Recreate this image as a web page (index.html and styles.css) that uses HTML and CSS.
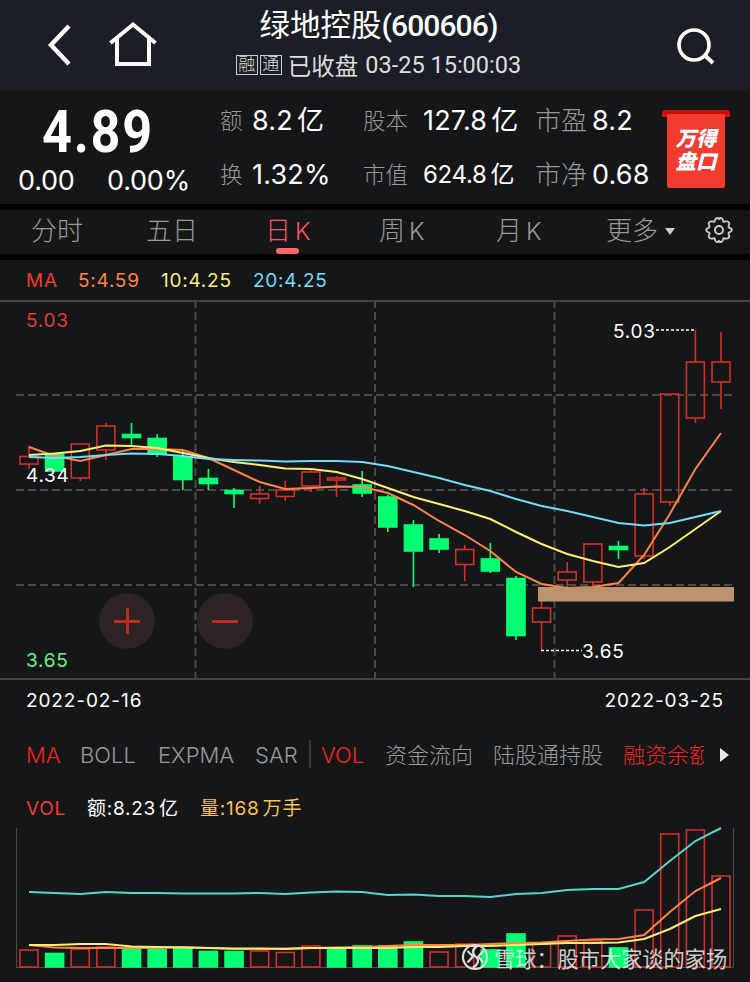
FILE: index.html
```
<!DOCTYPE html>
<html lang="zh-CN">
<head>
  <meta charset="UTF-8">
  <meta name="viewport" content="width=device-width, initial-scale=1.0">
  <title>绿地控股(600606)</title>
  <link rel="stylesheet" href="styles.css">
</head>
<body>
  <header class="topbar">
    <div class="nav">
      <svg width="26" height="44" viewBox="0 0 26 44"><path d="M23 3 L5 22 L23 41" fill="none" stroke="#fff" stroke-width="4.4"/></svg>
      <svg class="home" width="50" height="48" viewBox="0 0 50 48"><path d="M2.500 22 L25 3.500 L47.500 22 M9 18 V43 H41 V18" fill="none" stroke="#fff" stroke-width="4"/></svg>
    </div>
    <div class="title">
      <h1>绿地控股<span class="code">(600606)</span></h1>
      <div class="status"><i>融</i><i>通</i><span class="closed">已收盘</span><span class="time">03-25 15:00:03</span></div>
    </div>
    <svg class="search" width="40" height="40" viewBox="0 0 40 40"><circle cx="19" cy="18" r="15" fill="none" stroke="#fff" stroke-width="3.600"/><path d="M29.500 28 L38 36" stroke="#fff" stroke-width="4"/></svg>
  </header>

  <section class="quote">
    <div class="price">
      <div class="last">4.89</div>
      <div class="change"><span>0.00</span><span>0.00%</span></div>
    </div>
    <dl class="stats">
      <dt>额</dt><dd>8.2<b>亿</b></dd>
      <dt>股本</dt><dd>127.8<b>亿</b></dd>
      <dt class="big">市盈</dt><dd>8.2</dd>
      <dt>换</dt><dd>1.32%</dd>
      <dt>市值</dt><dd class="small">624.8<b>亿</b></dd>
      <dt class="big">市净</dt><dd>0.68</dd>
    </dl>
    <div class="banner"><div class="flag">万得<br>盘口</div></div>
  </section>

  <nav class="tabs">
    <span>分时</span>
    <span>五日</span>
    <span class="active">日<em>K</em></span>
    <span>周<em>K</em></span>
    <span>月<em>K</em></span>
    <span class="more">更多</span>
    <svg width="30" height="30" viewBox="0 0 30 30"><path d="M11.300 4.500 C12 2.500 13.500 2.500 15 4 C16.500 2.500 18 2.500 18.700 4.500 L19.500 6.800 L22.500 6.400 C25 6.200 26 8.500 24.800 10.500 C24 12 24.500 12.600 26.300 13.200 C28.300 14 28.300 16 26.300 16.800 C24.500 17.400 24 18 24.800 19.500 C26 21.500 25 23.800 22.500 23.600 L19.500 23.200 L18.700 25.500 C18 27.500 16.500 27.500 15 26 C13.500 27.500 12 27.500 11.300 25.500 L10.500 23.200 L7.500 23.600 C5 23.800 4 21.500 5.200 19.500 C6 18 5.500 17.400 3.700 16.800 C1.700 16 1.700 14 3.700 13.200 C5.500 12.600 6 12 5.200 10.500 C4 8.500 5 6.200 7.500 6.400 L10.500 6.800 Z" fill="none" stroke="#ccc" stroke-width="1.900"/><circle cx="15" cy="15" r="4" fill="none" stroke="#ccc" stroke-width="2"/></svg>
  </nav>

  <div class="legend ma">
    <span class="red">MA</span>
    <span class="orange">5:4.59</span>
    <span class="yellow">10:4.25</span>
    <span class="blue">20:4.25</span>
  </div>

  <div class="kline">
    <svg id="kline" width="750" height="380" viewBox="0 300 750 380"></svg>
    <button class="zoom in" aria-label="放大"></button>
    <button class="zoom out" aria-label="缩小"></button>
  </div>
  <div class="dates"><span>2022-02-16</span><span>2022-03-25</span></div>

  <div class="indicators">
    <span class="on">MA</span>
    <span>BOLL</span>
    <span>EXPMA</span>
    <span>SAR</span>
    <span class="on second">VOL</span>
    <span class="cn">资金流向</span>
    <span class="cn">陆股通持股</span>
    <span class="cn on cut">融资余额</span>
  </div>

  <div class="legend vol">
    <span class="red">VOL</span>
    <span class="white">额:8.23<b>亿</b></span>
    <span class="gold">量:168<b>万手</b></span>
  </div>

  <div class="volume">
    <svg id="volume" width="750" height="157" viewBox="0 825 750 157"></svg>
    <div class="watermark">
      <svg width="28" height="28" viewBox="0 0 28 28" fill="none" stroke="#ddd" stroke-width="2.200"><circle cx="14" cy="14" r="12"/><path d="M6.500 8 L12 13.500 L6.500 19.500 M16 3 C10.500 7 11 10.500 15 14 C18.500 17 17.500 21 12 25 M22 8 L17.500 13.500 L22 19.500"/></svg>
      <span>雪球：股市大家谈的家扬</span>
    </div>
  </div>

  <script src="chart.js"></script>
</body>
</html>
```
FILE: styles.css
```
* {
  box-sizing: border-box;
}
body {
  margin: 0;
  width: 750px;
  height: 982px;
  overflow: hidden;
  background: #151618;
  color: #fff;
  font-family: Inter, "Noto Sans CJK SC", sans-serif;
}
svg {
  display: block;
}
.topbar {
  display: flex;
  justify-content: space-between;
  height: 90px;
  background: #1b1e27;
}
.nav {
  display: flex;
  width: 200px;
  padding: 23px 0 0 46px;
}
.home {
  margin-left: 36px;
  margin-top: -2px;
}
.title {
  width: 356px;
  text-align: center;
}
.title h1 {
  margin: 7px 0 0;
  font-size: 30.5px;
  line-height: 36px;
  font-weight: 400;
  white-space: nowrap;
}
.code {
  font-family: Roboto, sans-serif;
  font-size: 30px;
  font-weight: 500;
  letter-spacing: -0.9px;
}
.status {
  display: flex;
  justify-content: center;
  align-items: center;
  margin-top: 6px;
  height: 30px;
  color: #dedede;
}
.status i {
  width: 22px;
  height: 20px;
  margin-right: 2px;
  border: 1px solid #ccc;
  font-size: 17px;
  line-height: 17px;
  font-style: normal;
  font-weight: 300;
}
.closed {
  margin-left: 4px;
  font-size: 23.5px;
}
.time {
  margin-left: 7px;
  font-family: Roboto, sans-serif;
  font-size: 23.5px;
}
.search {
  margin: 27px 35px 0 118px;
}
.quote {
  display: flex;
  height: 114px;
  line-height: 1;
}
.price {
  width: 220px;
}
.last {
  margin: 12px 0 0 42px;
  font-family: Roboto, sans-serif;
  font-size: 60px;
  font-weight: 700;
  letter-spacing: 2px;
  transform: scaleX(0.87);
  transform-origin: left;
}
.change {
  display: flex;
  margin: 5px 0 0 18px;
  font-size: 27px;
  letter-spacing: -0.2px;
}
.change span {
  width: 89px;
}
.stats {
  display: grid;
  grid-template-columns: 32px 111px 60px 112px 57px 70px;
  grid-template-rows: 54px 54px;
  margin: 4px 0 0;
  line-height: 54px;
  white-space: nowrap;
}
.stats dt {
  color: #979797;
  font-size: 22.5px;
  font-weight: 300;
}
.stats dt.big {
  font-size: 26px;
}
.stats dd {
  margin: 0;
  font-size: 27px;
  letter-spacing: 0.2px;
}
.stats dd b {
  margin-left: 4px;
  font-weight: 400;
}
.stats dd.small {
  font-size: 24px;
  letter-spacing: -0.3px;
}
.banner {
  width: 68px;
  height: 78px;
  margin-top: 20px;
  border-top: 7px solid #cf100b;
  border-radius: 4px;
}
.flag {
  width: 58px;
  height: 74px;
  margin: -3px 5px 0;
  padding-top: 13px;
  background: #f23c30;
  border-radius: 2px;
  font-size: 20.5px;
  line-height: 23px;
  font-weight: 900;
  font-style: italic;
  text-align: center;
}
.tabs {
  display: grid;
  grid-template-columns: 115px 119px 114px 117px 110px 98px 40px;
  height: 56px;
  padding-left: 31px;
  border-top: 6px solid #000;
  border-bottom: 6px solid #000;
  color: #999;
  font-size: 26px;
  line-height: 41px;
  font-weight: 300;
}
.tabs em {
  margin-left: 4px;
  font-style: normal;
  font-size: 24px;
}
.tabs .active {
  position: relative;
  color: #ff5261;
}
.tabs .active::after {
  content: "";
  position: absolute;
  left: 11px;
  top: 38px;
  width: 23px;
  height: 6px;
  border-radius: 3px;
  background: #ff6468;
}
.more::after {
  content: "";
  display: inline-block;
  margin-left: 7px;
  border: 5.5px solid transparent;
  border-top: 7px solid #ccc;
  border-bottom: 0;
  vertical-align: 5px;
}
.tabs svg {
  margin-top: 5px;
}
.legend {
  display: flex;
  height: 40px;
  padding-left: 26px;
  line-height: 42px;
  font-size: 19px;
  letter-spacing: 0.75px;
  white-space: nowrap;
}
.legend b {
  margin-left: 3px;
  font-weight: 400;
}
.red { color: #e93d30; }
.orange { color: #ff8345; }
.yellow { color: #f9ee7e; }
.blue { color: #76dcf8; }
.gold { color: #f8c24f; }
.ma .red { width: 52px; }
.ma .orange { width: 83px; }
.ma .yellow { width: 92px; }
.kline {
  position: relative;
  height: 380px;
}
.zoom {
  position: absolute;
  top: 293px;
  width: 56px;
  height: 56px;
  padding: 0;
  border: 0;
  border-radius: 50%;
  background: linear-gradient(#c1271d, #c1271d) center / 26px 3px no-repeat #2d2224;
}
.zoom.in {
  left: 99px;
  background: linear-gradient(#c1271d, #c1271d) center / 26px 3px no-repeat, linear-gradient(#c1271d, #c1271d) center / 3px 26px no-repeat #2d2224;
}
.zoom.out {
  left: 197px;
}
.dates {
  display: flex;
  justify-content: space-between;
  height: 40px;
  padding: 0 26px;
  line-height: 42px;
  font-size: 19px;
  letter-spacing: 0.9px;
}
.indicators {
  display: grid;
  grid-template-columns: 54px 78px 97px 66px 64px 108px 130px 81px 27px;
  height: 68px;
  padding-left: 26px;
  line-height: 70px;
  font-size: 22px;
  font-weight: 300;
  color: #999;
  white-space: nowrap;
}
.indicators .on {
  color: #f3231f;
}
.second {
  position: relative;
}
.second::before {
  content: "";
  position: absolute;
  left: -12px;
  top: 20px;
  height: 28px;
  border-left: 2px solid #38393b;
}
.indicators::after {
  content: "";
  align-self: center;
  justify-self: end;
  margin-right: 2px;
  border: 7px solid transparent;
  border-left: 9px solid #e8e8e8;
  border-right: 0;
}
.cut {
  overflow: hidden;
}
.vol {
  height: 37px;
}
.vol .red { width: 61px; }
.vol .white { width: 113px; }
.vol b {
  letter-spacing: 1px;
}
.volume {
  position: relative;
  height: 157px;
}
.watermark {
  position: absolute;
  left: 461px;
  top: 118px;
  display: flex;
  align-items: center;
  gap: 5px;
  height: 28px;
  color: rgba(255, 255, 255, 0.8);
  font-size: 21.2px;
  white-space: nowrap;
}
.grid {
  stroke: #48494b;
  stroke-width: 2;
  stroke-dasharray: 8 4;
}
.frame {
  stroke: #444547;
  stroke-width: 2;
}
.up {
  fill: none;
  stroke: #d62f27;
  stroke-width: 1.6;
}
.down {
  fill: #04ff73;
  stroke: #04ff73;
  stroke-width: 1.6;
}
.line {
  fill: none;
  stroke-width: 2;
}
.leader {
  stroke: #fff;
  stroke-width: 1.6;
  stroke-dasharray: 3 2;
}
svg text {
  font-size: 19px;
  letter-spacing: 0.75px;
}
```
FILE: chart.js
```
// [high, body top, body bottom, low, direction, volume top]
const days = [
  [446, 456.5, 464, 469, 1, 950], [454, 454, 471, 471, 0, 953.5],
  [444, 444, 478, 481, 1, 949], [423, 426, 450, 460, 1, 947],
  [423, 434.5, 437.5, 447, 0, 949.5], [434, 438.5, 454, 457, 0, 949.5],
  [451, 457, 479.5, 490, 0, 948], [469, 478.5, 483.5, 490, 0, 951.5],
  [488, 490.5, 493.5, 508, 0, 951.5], [486, 494, 498.5, 504, 1, 951],
  [481, 490, 496.5, 501, 1, 952.5], [470, 472, 486, 492, 1, 946],
  [476, 478, 480, 497, 1, 949], [471, 485, 493, 497, 0, 946],
  [495, 497, 527, 532, 0, 946], [520, 525, 551, 587, 0, 942],
  [534, 539, 549, 553, 0, 952], [545, 549.5, 564.5, 581, 1, 944],
  [543, 559, 571, 573, 0, 950], [576, 578.5, 635.5, 640, 0, 934],
  [601, 608, 622, 650, 1, 944], [562, 572, 580, 587, 1, 936],
  [544, 544, 582, 586, 1, 941], [541, 546.5, 549.5, 559, 0, 948],
  [488, 494, 556, 559, 1, 910], [394, 394, 502, 506, 1, 834],
  [330, 362, 418, 423, 1, 830], [332, 362, 382, 409, 1, 876]
];
const green = [1, 4, 5, 6, 7, 8, 12, 13, 14, 15, 18, 19, 23];

const ma5 = [447, 456, 461, 455, 449, 449, 450, 458, 470, 482, 489, 488, 486.5, 487, 493, 505, 521, 535, 551, 572, 584, 588, 587, 583, 555, 514, 469, 433];
const ma10 = [455, 453.5, 451, 445.5, 446, 448, 453, 458, 462, 465, 468.5, 469, 472, 479, 488, 497, 504, 511, 519, 532, 544, 554, 561, 567, 563, 547, 529, 511];
const ma20 = [457, 458, 457, 455, 453.5, 454, 456, 459, 460, 460.5, 461.5, 461, 461, 462, 466, 472, 478, 485, 491, 499, 506, 511, 517, 523, 525.5, 523, 517, 511];
const margin = [892, 893, 894, 892, 893, 893, 893.5, 893.5, 893.5, 893, 894, 892.5, 891.5, 892, 895, 894.5, 896, 896, 897, 894, 893, 890, 889, 889, 882, 861, 841, 828];
const vol5 = [945, 947.5, 948, 948, 948, 948, 947, 948, 949, 949, 948.5, 948, 947.5, 947, 946, 945, 945, 945, 944, 943, 942.5, 941, 939.5, 939, 935, 912, 891, 878];
const vol10 = [945, 945, 944, 944, 946.5, 947, 947.5, 948, 948.5, 948.5, 949, 948, 948, 948, 948, 947, 947, 946, 946, 945, 944, 943, 943, 942.5, 939, 929, 916, 909];

const x = i => 29 + i * 25.63;

function line(values, color) {
  const points = values.map((y, i) => `${x(i).toFixed(1)},${y}`).join(' ');
  return `<polyline class="line" stroke="${color}" points="${points}"/>`;
}

function drawKline() {
  let out = '';
  for (const y of [395, 490, 585]) out += `<path class="grid" d="M16 ${y} H733"/>`;
  for (const gx of [195.5, 375, 554.5]) out += `<path class="grid" d="M${gx} 300 V678"/>`;
  out += '<path class="frame" d="M0 301 H750 M0 679 H750"/>';
  days.forEach(([high, top, bottom, low, up], i) => {
    const c = x(i);
    out += `<g class="${up ? 'up' : 'down'}"><path d="M${c} ${high} V${top} M${c} ${bottom} V${low}"/>`;
    out += `<rect x="${c - 9}" y="${top}" width="18" height="${bottom - top}"/></g>`;
  });
  out += line(ma5, '#ff8345') + line(ma10, '#fbec72') + line(ma20, '#72dcfa');
  // support zone
  out += '<rect x="538" y="587" width="196" height="14.5" fill="#bd936d"/>';
  out += '<path class="leader" d="M656 330 H696 M541 650.5 H582"/>';
  out += '<text x="26" y="327" fill="#e5392f">5.03</text><text x="26" y="482" fill="#fff">4.34</text><text x="26" y="667" fill="#69f28d">3.65</text>';
  out += '<text x="613" y="338" fill="#fff">5.03</text><text x="582" y="658" fill="#fff">3.65</text>';
  document.getElementById('kline').innerHTML = out;
}

function drawVolume() {
  let out = '<path d="M16.500 828 V967.500 M733.500 828 V967.500" stroke="#48494b"/>';
  out += '<path d="M16 967.500 H733" stroke="#7c3931"/>';
  days.forEach((d, i) => {
    out += `<rect class="${green.includes(i) ? 'down' : 'up'}" x="${x(i) - 9}" y="${d[5]}" width="18" height="${967 - d[5]}"/>`;
  });
  out += line(margin, '#55d6cb') + line(vol5, '#ff8345') + line(vol10, '#fbec72');
  document.getElementById('volume').innerHTML = out;
}

drawKline();
drawVolume();
```
